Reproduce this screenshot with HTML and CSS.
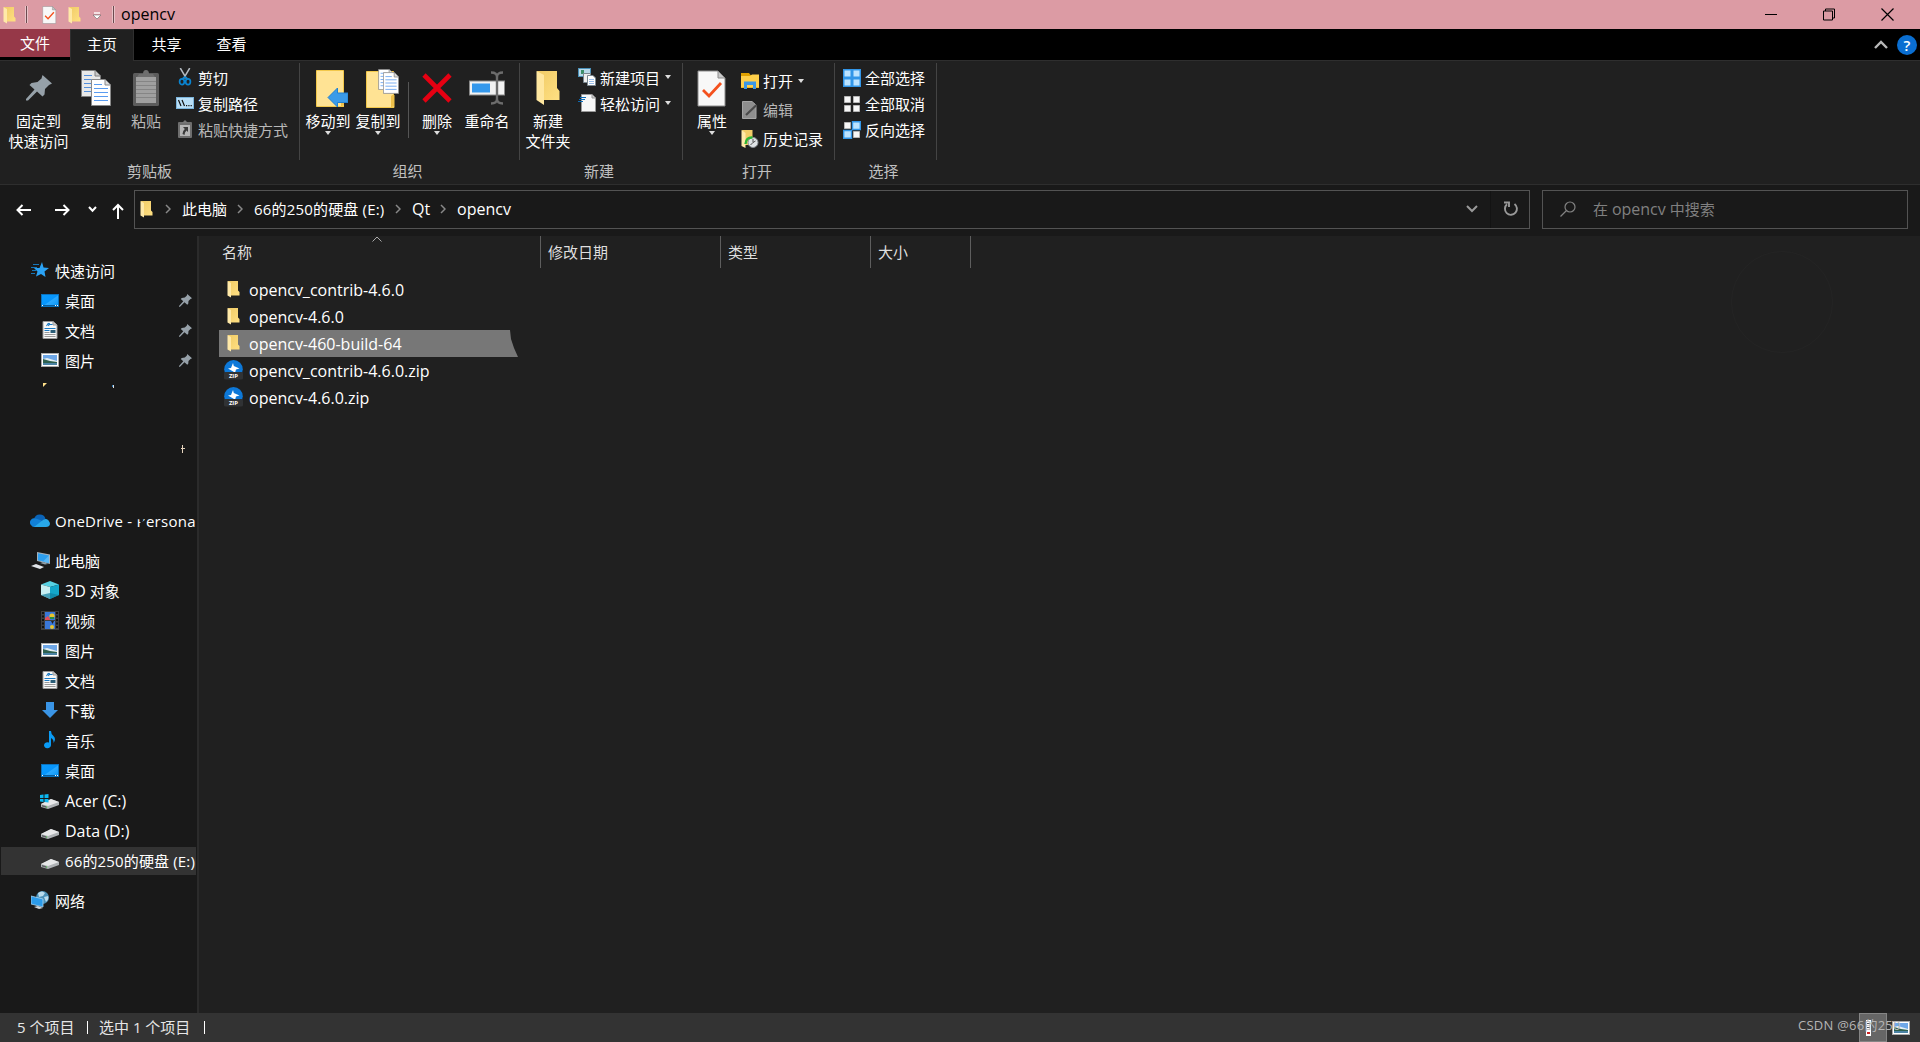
FILE: index.html
```html
<!DOCTYPE html>
<html lang="zh-CN">
<head>
    <meta charset="UTF-8">
    <meta name="viewport" content="width=device-width, initial-scale=1.0">
    <title>opencv</title>
    <link rel="stylesheet" href="styles.css">
</head>
<body>

<!-- 图标 -->
<svg class="defs" width="0" height="0">
    <linearGradient id="gFolder" x1="0" x2="1" y1="0" y2="1"><stop offset="0" stop-color="#f0cb66"/><stop offset="1" stop-color="#ffe083"/></linearGradient>
    <linearGradient id="gBlue" x1="0" x2="1" y1="0" y2="1"><stop offset="0" stop-color="#0a9bff"/><stop offset=".5" stop-color="#0795fb"/><stop offset=".55" stop-color="#2aa9ff"/><stop offset="1" stop-color="#0a95f5"/></linearGradient>
    <symbol id="folder" viewBox="0 0 13 18">
        <path d="M1 1H11V10.500L12.500 12V15.500H3Z" fill="url(#gFolder)"/>
        <path d="M.5 1L4 3V17.500L.5 15.500Z" fill="#ffe9a8"/>
    </symbol>
    <symbol id="page" viewBox="0 0 30 37">
        <path d="M1 1H21L28 8V36H1Z" fill="#f8f8f8" stroke="#8c8c8c"/>
        <path d="M21 1V8H28Z" fill="#c8c8c8" stroke="#8c8c8c"/>
    </symbol>
    <symbol id="check" viewBox="0 0 30 37">
        <use href="#page"/>
        <path d="M6 20L12 26L24 13" fill="none" stroke="#f4511e" stroke-width="2.800"/>
    </symbol>
    <symbol id="pin" viewBox="0 0 26 26">
        <path d="M16.500 0L26 8.500L23 10L19 14L18.500 19.500L16.500 21.500L11 16.500L2 25.500L0 25.500L0 24L8.500 14.500L3.500 10L5.500 8L11.500 7L15.500 3.500Z" fill="#96a1a9"/>
    </symbol>
    <symbol id="sheet" viewBox="0 0 20 27">
        <path d="M.5 .5H14L19.500 6V26.500H.5Z" fill="#fff" stroke="#8a8a8a"/>
        <path d="M14 .5V6H19.500" fill="#ddd" stroke="#8a8a8a"/>
        <path d="M3 5.500H11M3 9.500H17M3 13.500H17M3 17.500H17M3 21.500H17" stroke="#5a9cf0"/>
    </symbol>
    <symbol id="copy" viewBox="0 0 30 36">
        <use href="#sheet" width="20" height="27" opacity=".9"/>
        <use href="#sheet" x="10" y="9" width="20" height="27"/>
    </symbol>
    <symbol id="clip" viewBox="0 0 26 36">
        <rect y="3" width="26" height="33" rx="1.500" fill="#5c5c5c"/>
        <path d="M3 7H23V33H3Z" fill="#a0a0a0"/>
        <path d="M3 11.500H23M3 15.500H23M3 19.500H23M3 23.500H23M3 27.500H23" stroke="#858585"/>
        <path d="M4 7L6 4H10Q10 0 13 0Q16 0 16 4H20L22 7Z" fill="#6e6e6e"/>
    </symbol>
    <symbol id="cut" viewBox="0 0 14 19">
        <path d="M2 0L9 12M12 0L5 12" stroke="#b4bac0" stroke-width="1.600"/>
        <g fill="none" stroke="#0a84d0" stroke-width="1.800"><ellipse cx="3.800" cy="14.500" rx="2.500" ry="3"/><ellipse cx="10.200" cy="14.500" rx="2.500" ry="3"/><path d="M4 11.500L7 9.500L10 11.500"/></g>
    </symbol>
    <symbol id="path" viewBox="0 0 18 12">
        <rect x=".5" y=".5" width="17" height="11" fill="#b9dff7" stroke="#7cb5dc"/>
        <path d="M2.500 3L5 9M6 3L8.500 9" stroke="#111" stroke-width="1.200"/>
        <path d="M10 8h1.200v1.200H10zM12.300 8h1.200v1.200h-1.200zM14.600 8h1.200v1.200h-1.200z" fill="#111"/>
    </symbol>
    <symbol id="shortcut" viewBox="0 0 14 18">
        <rect y="2" width="14" height="16" rx="1" fill="#6e6e6e"/><path d="M4 3L7 0L10 3Z" fill="#777"/>
        <rect x="2" y="5" width="10" height="11" fill="#b5b5b5"/>
        <path d="M5 7H10V12L8.500 10.500Q6.500 12 6.500 15L4.500 14Q4.500 11 6.800 9Z" fill="#3a3a3a"/>
    </symbol>
    <symbol id="bigfolder" viewBox="0 0 28 37">
        <path d="M.5 .5H27.500V24H28V36.500H.5Z" fill="#ffe394" stroke="#f2c84b"/>
        <path d="M25 25L28 23V35L25 36.500Z" fill="#eec04a"/>
    </symbol>
    <symbol id="moveto" viewBox="0 0 32 38">
        <use href="#bigfolder" y="1" width="28" height="37"/>
        <path d="M12 28.500L21.500 19V24H32V33.500H21.500V38Z" fill="#3b9be9" stroke="#2280d0"/>
    </symbol>
    <symbol id="copyto" viewBox="0 0 34 39">
        <use href="#bigfolder" y="2" width="30" height="37"/>
        <use href="#sheet" x="13" width="16" height="21"/>
        <use href="#sheet" x="18" y="3" width="16" height="22"/>
    </symbol>
    <symbol id="delete" viewBox="0 0 30 30">
        <path d="M2 2L28 28M28 2L2 28" stroke="#e60012" stroke-width="4.600"/>
    </symbol>
    <symbol id="rename" viewBox="0 0 36 34">
        <rect x=".5" y="10" width="35" height="14" fill="#f2f2f2" stroke="#888"/>
        <rect x="3" y="12.500" width="18" height="9" fill="#3498ec"/>
        <path d="M22 1.500Q28 1.500 28 6Q28 1.500 34 1.500M28 5V29M22 32.500Q28 32.500 28 28Q28 32.500 34 32.500" fill="none" stroke="#6c6c6c" stroke-width="2.400"/>
    </symbol>
    <symbol id="newfolder" viewBox="0 0 24 36">
        <path d="M1 1H21V18L23.500 21V30H5Z" fill="url(#gFolder)"/>
        <path d="M.5 1L8 5V35L.5 30Z" fill="#ffe7a0"/>
    </symbol>
    <symbol id="newitem" viewBox="0 0 18 18">
        <rect x=".5" y=".5" width="12" height="8" fill="#b9d9e8" stroke="#4a90b8"/><rect x="3" y="2" width="3" height="4" fill="#3c8f6a"/>
        <path d="M5.500 5.500H12.500V14.500H5.500Z" fill="#eee" stroke="#7a8790"/>
        <path d="M9.500 7.500H15L17.500 10V17.500H9.500Z" fill="#fff" stroke="#7a8790"/>
        <path d="M11 11.500H16M11 13.500H16M11 15.500H16" stroke="#8db7e8" stroke-width=".9"/>
    </symbol>
    <symbol id="easy" viewBox="0 0 18 18">
        <path d="M3.500 .5H14L17.500 4V17.500H3.500Z" fill="#f7f7f7" stroke="#999"/><path d="M14 .5V4H17.500" fill="#ccc" stroke="#999"/>
        <path d="M2 3.500H8M1 5.500H7M0 7.500H5" stroke="#0d6ab4" stroke-width="1.200"/>
    </symbol>
    <symbol id="open" viewBox="0 0 18 16">
        <path d="M0 0H8L9.500 2H18V15H0Z" fill="#e0a100"/><path d="M0 3H9L11 1.500H18V14.500H0Z" fill="#ffd04a"/>
        <path d="M3 8.500H15V16H12V12H6V16H3Z" fill="#3b97e4"/>
    </symbol>
    <symbol id="edit" viewBox="0 0 16 18">
        <path d="M.5 .5H10L14 4V17.500H.5Z" fill="#8e8e8e" stroke="#a5a5a5"/>
        <path d="M4 14L14.500 4" stroke="#4a4a4a" stroke-width="2.200"/>
    </symbol>
    <symbol id="history" viewBox="0 0 17 18">
        <path d="M.5 0H11V15H3Z" fill="#f2cd68"/><path d="M0 0L4 3V18L0 16Z" fill="#ffe9a8"/>
        <circle cx="11.500" cy="12.500" r="5" fill="#dfe3e6" stroke="#858b90"/><path d="M11.500 9V12.500L14 11M11.500 12.500L9 15" fill="none" stroke="#555"/>
        <path d="M4 14Q4.500 7 11 7.500" fill="none" stroke="#2fb535" stroke-width="2.400"/>
    </symbol>
    <symbol id="selall" viewBox="0 0 18 18">
        <rect width="18" height="18" fill="#3296e8"/>
        <path d="M1.500 1.500h6v6h-6zM10.500 1.500h6v6h-6zM1.500 10.500h6v6h-6zM10.500 10.500h6v6h-6z" fill="#bce3ff"/>
    </symbol>
    <symbol id="selnone" viewBox="0 0 18 18">
        <path d="M1.500 1.500h6v6h-6zM10.500 1.500h6v6h-6zM1.500 10.500h6v6h-6zM10.500 10.500h6v6h-6z" fill="#f6f6f6" stroke="#b5b5b5"/>
    </symbol>
    <symbol id="selinv" viewBox="0 0 18 18">
        <path d="M1.500 1.500h6v6h-6zM10.500 10.500h6v6h-6z" fill="#f6f6f6" stroke="#b5b5b5"/>
        <path d="M9.500 .7h7.800v7.800H9.500zM.7 9.500h7.800v7.800H.7z" fill="#bce3ff" stroke="#3296e8" stroke-width="1.400"/>
    </symbol>
    <symbol id="star" viewBox="0 0 18 16">
        <path d="M11 0L12.500 5.500L18 6L13.500 9.500L14.500 15L10 12L5 14.500L6.500 9.500L3 6H8.500Z" fill="#2ba3f5"/>
        <path d="M2 2.500H8M0 5.500H6M1 8.500H5M0 11.500H4" stroke="#1676b8"/>
    </symbol>
    <symbol id="desktop" viewBox="0 0 18 13">
        <rect x=".5" y=".5" width="17" height="12" fill="url(#gBlue)" stroke="#0a72bd"/>
        <path d="M1 11.500H17" stroke="#075b9a"/><path d="M1 11.500h1M14 11.500h1M16 11.500h1" stroke="#fff"/>
    </symbol>
    <symbol id="doc" viewBox="0 0 15 18">
        <path d="M.5 .5H10.500L14.500 4V17.500H.5Z" fill="#f8f8f8" stroke="#999"/><path d="M10.500 .5V4H14.500" fill="#ccc" stroke="#999"/>
        <path d="M4 5L6 2M6 5L7 2M7 3.500H10M2 7.500H13M2 9.500H7" stroke="#1979c4" stroke-width="1.100"/>
        <path d="M2 11.500H7M2 13.500H13M2 15.500H13" stroke="#999"/><rect x="8" y="9" width="5" height="3" fill="#2a5d77"/>
    </symbol>
    <symbol id="picture" viewBox="0 0 18 14">
        <rect x=".5" y=".5" width="17" height="13" fill="#fff" stroke="#aaa"/>
        <rect x="2" y="2" width="14" height="10" fill="#6fa8e8"/><path d="M2 6L6 5L16 8V10H2Z" fill="#e7f1f5"/><path d="M2 6L9 8L16 9V10L2 10Z" fill="#2e6150"/><rect x="2" y="10" width="14" height="2" fill="#4b83a5"/>
    </symbol>
    <symbol id="cloud" viewBox="0 0 20 13">
        <path d="M4 5A6 6 0 0 1 15.500 4.500L10 9L1 11A4 4 0 0 1 4 5Z" fill="#0a64b8"/>
        <path d="M1 11A4 4 0 0 1 5 4.500Q8 4.500 14 8L8 13H4Q2 13 1 11Z" fill="#1180d8"/>
        <path d="M4 13L13 6Q16 4 18.500 6.500Q20 8 20 10Q19.500 13 16 13Z" fill="#28a8ea"/>
    </symbol>
    <symbol id="pc" viewBox="0 0 19 17">
        <path d="M6 0L19 2.500V12L6 9Z" fill="#a4b1bb"/><path d="M7 1.200L18 3.500V11L7 8.200Z" fill="#2d9ff0"/><path d="M18 3.500V11L12 9.500Z" fill="#59b8f7"/>
        <path d="M9 11L14 12.500L17 12L12 10Z" fill="#8fa0aa"/><path d="M0 14L5 12L13 15L9 17Z" fill="#dfe3e8"/>
    </symbol>
    <symbol id="cube" viewBox="0 0 18 18">
        <path d="M9 0L18 3.500L9 6L0 3.500Z" fill="#57d2e4"/><path d="M0 3.500L9 6V18L0 14Z" fill="#c8f0f4"/><path d="M18 3.500L9 6V18L18 14Z" fill="#14a7ca"/><path d="M0 14L9 12L18 14L9 18Z" fill="#0f7f9f" opacity=".7"/>
    </symbol>
    <symbol id="video" viewBox="0 0 18 19">
        <rect width="18" height="19" fill="#3e3e3e"/><rect x="4" y="1" width="10" height="8" fill="#3a78d8"/><rect x="4" y="10" width="10" height="8" fill="#3a78d8"/>
        <path d="M2 1V18M16 1V18" stroke="#111" stroke-width="2" stroke-dasharray="2 1.500"/>
        <circle cx="11" cy="5" r="2.600" fill="#e8c52e"/><path d="M4 7L7 5L9 8V9H4Z" fill="#e24e58"/><rect x="9" y="6" width="4" height="2" fill="#268d46"/><circle cx="11" cy="16" r="2" fill="#e8c52e"/><path d="M10 10h3l-1.500 3z" fill="#222"/>
    </symbol>
    <symbol id="download" viewBox="0 0 16 16">
        <path d="M4 0H12V8H16L8 16L0 8H4Z" fill="#3a95e6"/>
    </symbol>
    <symbol id="music" viewBox="0 0 12 18">
        <path d="M5 0H7Q7 3 9.500 5Q12.500 8 9.500 12Q10 8.500 7 7V14A3.500 3 0 1 1 5 11.500Z" fill="#0a9bf5"/>
    </symbol>
    <symbol id="disk" viewBox="0 0 18 10">
        <path d="M0 5L10 0L18 3V6L7 10L0 8Z" fill="#aeb2b5"/><path d="M0 5L10 0L18 3L7 7Z" fill="#e6e7e8"/><path d="M1 6L6 7.500V9L1 7.500Z" fill="#5c6164"/><rect x="5" y="7.400" width="1.200" height="1.200" fill="#6bdc6b"/>
    </symbol>
    <symbol id="diskwin" viewBox="0 0 19 15">
        <use href="#disk" x="1" y="5" width="18" height="10"/>
        <path d="M0 1L3.500 .5V4H0ZM4.500 .4L8.500 0V4H4.500ZM0 5H3.500V8L0 7.500ZM4.500 5H8.500V8.500L4.500 8Z" fill="#0cb8f2"/>
    </symbol>
    <symbol id="network" viewBox="0 0 18 18">
        <circle cx="11.500" cy="6.500" r="6.500" fill="#4a90b8"/><path d="M7 2Q11 -1 14 2L12 5L8 6ZM13 6L17 5Q18 9 15 11Z" fill="#b9dced"/>
        <path d="M0 5L12 8V16L0 13Z" fill="#2b9bea" stroke="#a9d3ee" stroke-width=".8"/><path d="M3 16L7 15L12 17L8 18Z" fill="#cfd6da"/>
    </symbol>
    <symbol id="zip" viewBox="0 0 19 20">
        <circle cx="9.500" cy="9.300" r="9.300" fill="#0d78d8"/>
        <path d="M9 3L7 8L4 8.500L10 12L11 13L12 9.500L15.500 8.500L9.800 6Z" fill="#fff"/>
        <rect y="12" width="19" height="7.500" rx="1.500" fill="#303234"/>
        <text x="9.500" y="18.200" text-anchor="middle" class="ziptext">ZIP</text>
    </symbol>
</svg>

<div class="window">
    <!-- 标题栏 -->
    <div class="titlebar">
        <svg class="t-folder" width="13" height="18"><use href="#folder"/></svg>
        <span class="t-sep"></span>
        <svg class="t-check" width="15" height="18"><use href="#check"/></svg>
        <svg class="t-folder2" width="13" height="18"><use href="#folder"/></svg>
        <svg class="t-drop" width="8" height="8"><path d="M1 1H7" stroke="#fff" stroke-width="1.400"/><path d="M0 3H8L4 7Z" fill="#fff" stroke="#555" stroke-width=".5"/></svg>
        <span class="t-sep"></span>
        <span class="title">opencv</span>
        <div class="controls">
            <svg width="12" height="13"><path d="M0 6.500H12" stroke="#000"/></svg>
            <svg width="12" height="13"><path d="M.5 3H9.500V12H.5ZM2.500 3V1H11.500V10H9.500" fill="none" stroke="#000"/></svg>
            <svg width="13" height="13"><path d="M.5 .5L12.500 12.500M12.500 .5L.5 12.500" stroke="#000" stroke-width="1.200"/></svg>
        </div>
    </div>

    <!-- 选项卡 -->
    <div class="tabs">
        <div class="tab file">文件</div>
        <div class="tab active">主页</div>
        <div class="tab">共享</div>
        <div class="tab">查看</div>
        <div class="help">
            <svg width="14" height="9"><path d="M1 8L7 2L13 8" fill="none" stroke="#b8b8b8" stroke-width="2.400"/></svg>
            <span class="question">?</span>
        </div>
    </div>

    <!-- 功能区 -->
    <div class="ribbon">
        <div class="group clipboard">
            <div class="tools">
                <div class="big b-pin"><div class="pic"><svg width="26" height="26"><use href="#pin"/></svg></div>固定到<br>快速访问</div>
                <div class="big b-copy"><div class="pic"><svg width="30" height="36"><use href="#copy"/></svg></div>复制</div>
                <div class="big b-paste dim"><div class="pic"><svg width="26" height="36"><use href="#clip"/></svg></div>粘贴</div>
                <div class="smalls">
                    <div class="small"><svg width="18" height="18"><use href="#cut"/></svg>剪切</div>
                    <div class="small"><svg width="18" height="12"><use href="#path"/></svg>复制路径</div>
                    <div class="small dim"><svg width="18" height="18"><use href="#shortcut"/></svg>粘贴快捷方式</div>
                </div>
            </div>
            <div class="caption">剪贴板</div>
        </div>
        <div class="group organize">
            <div class="tools">
                <div class="big"><div class="pic"><svg class="i-move" width="32" height="38"><use href="#moveto"/></svg></div>移动到<i class="arrow"></i></div>
                <div class="big b-copyto"><div class="pic"><svg class="i-copyto" width="34" height="39"><use href="#copyto"/></svg></div>复制到<i class="arrow"></i></div>
                <span class="divider"></span>
                <div class="big"><div class="pic"><svg width="30" height="30"><use href="#delete"/></svg></div>删除<i class="arrow"></i></div>
                <div class="big"><div class="pic"><svg width="36" height="34"><use href="#rename"/></svg></div>重命名</div>
            </div>
            <div class="caption">组织</div>
        </div>
        <div class="group create">
            <div class="tools">
                <div class="big"><div class="pic"><svg width="24" height="36"><use href="#newfolder"/></svg></div>新建<br>文件夹</div>
                <div class="smalls">
                    <div class="small"><svg width="18" height="18"><use href="#newitem"/></svg>新建项目<i class="arrow"></i></div>
                    <div class="small"><svg width="18" height="18"><use href="#easy"/></svg>轻松访问<i class="arrow"></i></div>
                </div>
            </div>
            <div class="caption">新建</div>
        </div>
        <div class="group opening">
            <div class="tools">
                <div class="big"><div class="pic"><svg width="30" height="37"><use href="#check"/></svg></div>属性<i class="arrow"></i></div>
                <div class="smalls loose">
                    <div class="small"><svg width="18" height="16"><use href="#open"/></svg>打开<i class="arrow"></i></div>
                    <div class="small dim"><svg width="18" height="18"><use href="#edit"/></svg>编辑</div>
                    <div class="small"><svg width="18" height="18"><use href="#history"/></svg>历史记录</div>
                </div>
            </div>
            <div class="caption">打开</div>
        </div>
        <div class="group selecting">
            <div class="tools">
                <div class="smalls">
                    <div class="small"><svg width="18" height="18"><use href="#selall"/></svg>全部选择</div>
                    <div class="small"><svg width="18" height="18"><use href="#selnone"/></svg>全部取消</div>
                    <div class="small"><svg width="18" height="18"><use href="#selinv"/></svg>反向选择</div>
                </div>
            </div>
            <div class="caption">选择</div>
        </div>
    </div>

    <!-- 地址栏 -->
    <div class="navbar">
        <div class="arrows">
            <svg width="15" height="12"><path d="M15 6H1.500M6.500 1L1.500 6L6.500 11" fill="none" stroke="#fff" stroke-width="2"/></svg>
            <svg width="15" height="12"><path d="M0 6H13.500M8.500 1L13.500 6L8.500 11" fill="none" stroke="#fff" stroke-width="2"/></svg>
            <svg width="9" height="7"><path d="M1 1L4.500 4.800L8 1" fill="none" stroke="#fff" stroke-width="2"/></svg>
            <svg width="12" height="16"><path d="M6 16V2M1 7L6 2L11 7" fill="none" stroke="#fff" stroke-width="2"/></svg>
        </div>
        <div class="address">
            <svg class="a-folder" width="13" height="18"><use href="#folder"/></svg>
            <svg class="chev" width="6" height="10"><path d="M1 1L5 5L1 9" fill="none" stroke="#888" stroke-width="1.500"/></svg>
            <span class="c1">此电脑</span>
            <svg class="chev" width="6" height="10"><path d="M1 1L5 5L1 9" fill="none" stroke="#888" stroke-width="1.500"/></svg>
            <span class="c2">66的250的硬盘 (E:)</span>
            <svg class="chev" width="6" height="10"><path d="M1 1L5 5L1 9" fill="none" stroke="#888" stroke-width="1.500"/></svg>
            <span class="c3">Qt</span>
            <svg class="chev" width="6" height="10"><path d="M1 1L5 5L1 9" fill="none" stroke="#888" stroke-width="1.500"/></svg>
            <span class="c4">opencv</span>
            <svg class="a-drop" width="12" height="8"><path d="M1 1L6 6L11 1" fill="none" stroke="#999" stroke-width="2"/></svg>
            <div class="refresh"><svg width="16" height="16"><path d="M11.500 3A6 6 0 1 1 4 3.300M1 1.500H6V6" fill="none" stroke="#999" stroke-width="1.900"/></svg></div>
        </div>
        <div class="search">
            <svg width="16" height="16"><circle cx="10" cy="6" r="5" fill="none" stroke="#828282" stroke-width="1.200"/><path d="M6.500 9.500L.5 15.500" stroke="#828282" stroke-width="1.300"/></svg>
            <span>在 <span class="latin">opencv</span> 中搜索</span>
        </div>
    </div>

    <div class="main">
        <!-- 导航窗格 -->
        <div class="sidebar">
            <div class="node root"><svg width="18" height="16"><use href="#star"/></svg>快速访问</div>
            <div class="node"><svg width="18" height="13"><use href="#desktop"/></svg>桌面<svg class="pinned" width="13" height="13"><use href="#pin"/></svg></div>
            <div class="node"><svg width="18" height="18"><use href="#doc"/></svg>文档<svg class="pinned" width="13" height="13"><use href="#pin"/></svg></div>
            <div class="node"><svg width="18" height="14"><use href="#picture"/></svg>图片<svg class="pinned" width="13" height="13"><use href="#pin"/></svg></div>
            <div class="node scrap"><svg width="196" height="30"><path d="M43 8H47L43 12Z" fill="#ffe08a"/><path d="M113.500 10V13" stroke="#ddd"/><path d="M112.500 10V12" stroke="#2b78b8"/></svg></div>
            <div class="node"></div>
            <div class="node scrap"><svg width="196" height="30"><path d="M182.500 10V18M181 13.500H185" stroke="#e6d4bd"/></svg></div>
            <div class="node root onedrive"><svg width="20" height="13"><use href="#cloud"/></svg><span>OneDrive - <span class="cut">P</span>ersona</span></div>
            <div class="node root gap thispc"><svg width="19" height="17"><use href="#pc"/></svg>此电脑</div>
            <div class="node"><svg width="18" height="18"><use href="#cube"/></svg><span><span class="latin">3D</span> 对象</span></div>
            <div class="node"><svg width="18" height="19"><use href="#video"/></svg>视频</div>
            <div class="node"><svg width="18" height="14"><use href="#picture"/></svg>图片</div>
            <div class="node"><svg width="18" height="18"><use href="#doc"/></svg>文档</div>
            <div class="node"><svg width="18" height="16"><use href="#download"/></svg>下载</div>
            <div class="node"><svg width="18" height="18"><use href="#music"/></svg>音乐</div>
            <div class="node"><svg width="18" height="13"><use href="#desktop"/></svg>桌面</div>
            <div class="node win"><svg width="19" height="15"><use href="#diskwin"/></svg><span class="latin">Acer (C:)</span></div>
            <div class="node drive"><svg width="18" height="10"><use href="#disk"/></svg><span class="latin">Data (D:)</span></div>
            <div class="node drive current"><svg width="18" height="10"><use href="#disk"/></svg>66的250的硬盘 (E:)</div>
            <div class="node root gap"><svg width="18" height="18"><use href="#network"/></svg>网络</div>
        </div>

        <!-- 文件列表 -->
        <div class="content">
            <div class="columns">
                <div class="col name">名称<svg class="sort" width="10" height="6"><path d="M.5 5.500L5 1L9.500 5.500" fill="none" stroke="#aaa"/></svg></div>
                <div class="col date">修改日期</div>
                <div class="col type">类型</div>
                <div class="col size">大小</div>
            </div>
            <div class="files">
                <div class="row"><svg width="19" height="18"><use href="#folder"/></svg>opencv_contrib-4.6.0</div>
                <div class="row"><svg width="19" height="18"><use href="#folder"/></svg>opencv-4.6.0</div>
                <div class="row selected"><svg width="19" height="18"><use href="#folder"/></svg>opencv-460-build-64</div>
                <div class="row"><svg width="19" height="20"><use href="#zip"/></svg>opencv_contrib-4.6.0.zip</div>
                <div class="row"><svg width="19" height="20"><use href="#zip"/></svg>opencv-4.6.0.zip</div>
            </div>
            <div class="ring"></div>
        </div>
    </div>

    <!-- 状态栏 -->
    <div class="status">
        <span class="s1">5 个项目</span>
        <span class="bar"></span>
        <span class="s2">选中 1 个项目</span>
        <span class="bar"></span>
        <div class="views">
            <div class="view on"><svg width="8" height="16"><rect x="1" width="5" height="16" fill="#fff"/><path d="M2 3.500H5M2 7.500H5" stroke="#555"/><rect x="2" y="12" width="3" height="2" fill="#c22"/></svg></div>
            <div class="view"><svg width="18" height="14"><use href="#picture"/></svg></div>
        </div>
        <span class="watermark">CSDN @66的250</span>
    </div>
</div>

</body>
</html>
```

FILE: styles.css
```css
* {
    box-sizing: border-box;
}

body {
    margin: 0;
    background-color: #202020;
    color: #fff;
    font-family: "Open Sans", "Noto Sans CJK SC", sans-serif;
    font-size: 15px;
    overflow: hidden;
}

svg {
    flex: none;
    display: block;
}

.defs {
    position: absolute;
}

.ziptext {
    font: bold 6px "Open Sans", sans-serif;
    fill: #fff;
}

.latin {
    font-size: 16px;
    line-height: 20px;
}

.window {
    width: 1920px;
    height: 1042px;
    display: flex;
    flex-direction: column;
    white-space: nowrap;
}

/* title bar */
.titlebar {
    height: 29px;
    flex: none;
    display: flex;
    align-items: center;
    background-color: #dc9ba4;
    color: #000;
    padding-left: 3px;
}

.t-sep {
    width: 3px;
    height: 17px;
    background-color: #6d4b50;
    border: solid #e9c3c8;
    border-width: 0 1px;
}

.t-folder {
    margin-right: 9px;
}

.t-check {
    margin-left: 14px;
}

.t-folder2 {
    margin-left: 11px;
}

.t-drop {
    margin: 3px 11px 0 12px;
}

.title {
    margin-left: 6px;
    padding-bottom: 1px;
    font-size: 16px;
}

.controls {
    margin-left: auto;
    margin-right: 26px;
    padding-bottom: 1px;
    display: flex;
    gap: 46px;
}

/* tabs */
.tabs {
    height: 31px;
    flex: none;
    display: flex;
    background-color: #000;
}

.tab {
    width: 65px;
    height: 31px;
    line-height: 31px;
    text-align: center;
}

.tab.file {
    width: 70px;
    height: 28px;
    line-height: 29px;
    background-color: #963848;
}

.tab.active {
    width: 64px;
    height: 32px;
    background-color: #202020;
    border: solid #2f2f2f;
    border-width: 1px 1px 0;
    line-height: 29px;
    z-index: 1;
}

.help {
    margin-left: auto;
    margin-right: 3px;
    display: flex;
    align-items: center;
    gap: 9px;
}

.question {
    width: 20px;
    height: 20px;
    line-height: 20px;
    border-radius: 50%;
    background-color: #0a6ed1;
    text-align: center;
    font-weight: 600;
}

/* ribbon */
.ribbon {
    height: 125px;
    flex: none;
    display: flex;
    border: solid #2e2e2e;
    border-width: 1px 0;
    padding-top: 2px;
}

.group {
    height: 119px;
    background: linear-gradient(#444, #444) right top / 1px 97px no-repeat;
    display: flex;
    flex-direction: column;
}

.tools {
    height: 97px;
    display: flex;
}

.caption {
    line-height: 22px;
    padding-right: 8px;
    text-align: center;
    color: #c0c0c0;
}

.clipboard { width: 300px; padding-left: 7px; }
.organize { width: 220px; padding-left: 3px; }
.create { width: 163px; padding-left: 3px; }
.opening { width: 152px; padding-left: 4px; }
.selecting { width: 102px; padding-left: 8px; }

.selecting .caption {
    padding-right: 13px;
}

.big {
    width: 50px;
    line-height: 20px;
    text-align: center;
    display: flex;
    flex-direction: column;
    align-items: center;
}

.b-pin { width: 63px; }
.b-copy { width: 52px; }
.b-paste { width: 48px; margin-right: 6px; }

.pic {
    height: 48px;
    padding-top: 2px;
    display: flex;
    align-items: center;
}

.i-move {
    margin-left: 8px;
}

.i-copyto {
    margin-left: 7px;
}

.arrow {
    width: 0;
    height: 0;
    border: 3.5px solid transparent;
    border-top: 4px solid #ddd;
    border-bottom: 0;
}

.divider {
    width: 1px;
    height: 56px;
    margin: 19px 3px 0 5px;
    background-color: #555;
}

.dim {
    color: #b8b8b8;
}

.smalls {
    padding-top: 1px;
}

.small {
    height: 26px;
    display: flex;
    align-items: center;
    gap: 4px;
}

.selecting .small svg {
    margin-top: 1px;
}

.small .arrow {
    margin-left: 1px;
}

.loose {
    padding: 3px 0 0 4px;
}

.loose .small {
    height: 29px;
}

.create .smalls {
    padding-left: 5px;
}

/* address bar */
.navbar {
    height: 51px;
    flex: none;
    display: flex;
    padding: 5px 12px 0 16px;
    background-color: #191919;
}

.arrows {
    width: 118px;
    height: 39px;
    display: flex;
    align-items: center;
}

.arrows svg:nth-child(2) { margin-left: 24px; }
.arrows svg:nth-child(3) { margin-left: 18px; }
.arrows svg:nth-child(4) { margin-left: 15px; margin-top: 3px; }

.address {
    width: 1396px;
    height: 39px;
    padding-bottom: 1px;
    border: 1px solid #535353;
    display: flex;
    align-items: center;
}

.address span {
    padding-bottom: 1px;
}

.a-folder { margin: 0 12px 0 5px; }
.chev { margin: 0 0 1px; }
.c1 { width: 55px; margin-left: 11px; }
.c2 { width: 141px; margin-left: 11px; letter-spacing: .18px; }
.c3 { width: 28px; margin-left: 11px; font-size: 16px; }
.c4 { margin-left: 11px; font-size: 16px; }

.a-drop {
    margin-left: auto;
    margin-right: 12px;
}

.refresh {
    width: 39px;
    height: 37px;
    border-left: 1px solid #131313;
    padding-left: 2px;
    display: flex;
    align-items: center;
    justify-content: center;
}

.search {
    width: 366px;
    height: 39px;
    margin-left: 12px;
    padding: 0 0 2px 17px;
    border: 1px solid #535353;
    display: flex;
    align-items: center;
    gap: 17px;
    color: #808080;
}

/* sidebar */
.main {
    height: 777px;
    flex: none;
    display: flex;
}

.sidebar {
    width: 199px;
    padding-top: 19px;
    background-color: #191919;
    border-right: 2px solid #2b2b2b;
}

.node {
    height: 30px;
    display: flex;
    align-items: center;
    gap: 6px;
    padding-left: 41px;
}

.node.root {
    padding-left: 31px;
}

.node.thispc {
    gap: 5px;
}

.pinned {
    margin-left: auto;
    margin-right: 5px;
}

.node.scrap {
    padding-left: 0;
}

.node.gap {
    margin-top: 10px;
}

.node.onedrive {
    margin-top: 40px;
    padding-left: 30px;
    padding-top: 1px;
    gap: 5px;
    letter-spacing: .27px;
}

/* half-hidden letter */
.cut {
    clip-path: polygon(0 44%, 100% 44%, 70% 54%, 38% 60%, 38% 100%, 0 100%);
    display: inline-block;
}

.node.win {
    padding-left: 40px;
}

.node > .latin {
    margin-top: 2px;
}

.win svg {
    margin-top: 3px;
}

.drive svg {
    margin-top: 8px;
}

.current {
    margin-right: 1px;
    margin-left: 1px;
    padding-left: 40px;
    letter-spacing: .15px;
    background: linear-gradient(#333, #333) 0 2px / 100% 28px no-repeat;
}

/* file list */
.content {
    flex: 1;
    position: relative;
    padding-left: 20px;
}

.columns {
    height: 33px;
    display: flex;
    color: #dedede;
}

.col {
    height: 32px;
    line-height: 32px;
    padding-left: 7px;
    border-right: 1px solid #5e5e5e;
}

.name { width: 322px; padding-left: 3px; display: flex; }
.date { width: 180px; }
.type { width: 150px; }
.size { width: 100px; }

.sort {
    margin-left: 120px;
}

.files {
    padding-top: 7px;
    font-size: 16px;
}

.row {
    width: 299px;
    height: 27px;
    display: flex;
    align-items: center;
    gap: 6px;
    padding-left: 5px;
}

.row svg {
    margin-bottom: 2px;
}

.selected {
    background-color: #777;
    clip-path: polygon(0 0, 291px 0, 292px 9px, 295px 18px, 299px 100%, 0 100%);
}

/* faint circle on the empty area */
.ring {
    position: absolute;
    left: 1532px;
    top: 15px;
    width: 102px;
    height: 102px;
    border: 1px solid #242424;
    border-radius: 50%;
}

/* status bar */
.status {
    height: 29px;
    flex: none;
    position: relative;
    display: flex;
    align-items: center;
    background-color: #333;
    padding-left: 17px;
    color: #e6e6e6;
}

.s1 { width: 70px; padding-bottom: 2px; }
.s2 { width: 105px; margin-left: 11px; padding-bottom: 2px; }

.bar {
    width: 1px;
    height: 13px;
    background-color: #fff;
}

.views {
    margin-left: auto;
    margin-right: 5px;
    display: flex;
}

.view {
    width: 28px;
    height: 29px;
    display: flex;
    align-items: center;
    justify-content: center;
}

.view.on {
    background-color: #666;
    border: 1px solid #858585;
    padding-right: 8px;
}

.watermark {
    position: absolute;
    left: 1798px;
    top: 2px;
    font-size: 13px;
    line-height: 20px;
    letter-spacing: .25px;
    color: #b5b5b5;
}
```
